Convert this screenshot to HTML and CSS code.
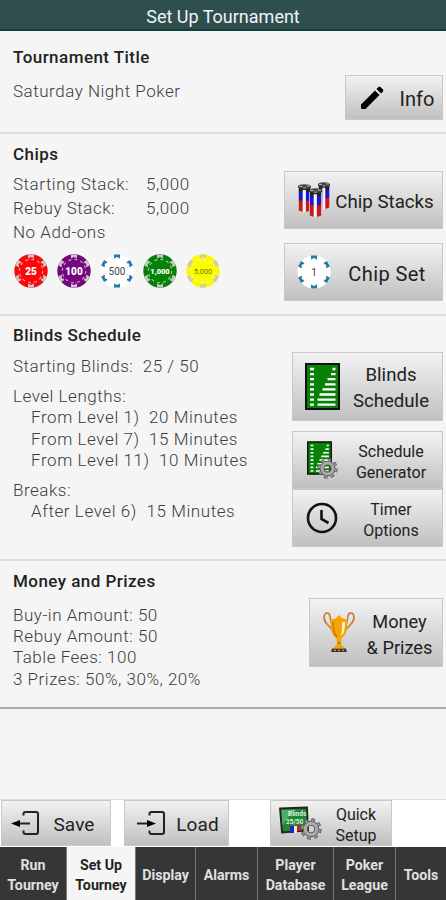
FILE: index.html
```html
<!DOCTYPE html>
<html lang="en">
<head>
    <meta charset="UTF-8">
    <meta name="viewport" content="width=device-width, initial-scale=1.0">
    <title>Set Up Tournament</title>
    <link rel="stylesheet" href="styles.css">
</head>
<body>
    <svg class="defs" width="0" height="0">
        <symbol id="chip" viewBox="0 0 34 34">
            <circle cx="17" cy="17" r="16.7" fill="currentColor"/>
            <g class="spots">
                <path id="spot" d="M14 .4h6v3.8h-1.600v-1h-2.800v1H14z"/>
                <use href="#spot" transform="rotate(60 17 17)"/>
                <use href="#spot" transform="rotate(120 17 17)"/>
                <use href="#spot" transform="rotate(180 17 17)"/>
                <use href="#spot" transform="rotate(240 17 17)"/>
                <use href="#spot" transform="rotate(300 17 17)"/>
            </g>
            <circle class="ring" cx="17" cy="17" r="11.700" fill="none" stroke-width="1.200" stroke-dasharray="3 3.130 3 3.120"/>
        </symbol>
        <symbol id="board" viewBox="0 0 35 47">
            <path d="M1 1h33v45H1z" fill="#078207" stroke="#111" stroke-width="2"/>
            <path d="M5 6h4M5 11.100h4M5 16.200h4M5 21.300h4M5 26.400h4M5 31.500h4M5 36.600h4M5 41.700h4M27.500 6h3M26 11.100h4.500M22.500 16.200h8M20 21.300h10.500M17.500 26.400h13M14.500 31.500h16M12.500 36.600h18M12.500 41.700h18" fill="none" stroke="#fff" stroke-width="2.300"/>
        </symbol>
        <symbol id="gear" viewBox="0 0 20 20">
            <circle cx="10" cy="10" r="8" fill="none" stroke="#555" stroke-width="3.400" stroke-dasharray="3.200 3.083"/>
            <circle cx="10" cy="10" r="5.200" fill="none" stroke="#555" stroke-width="4.600"/>
            <circle cx="10" cy="10" r="8" fill="none" stroke="#999" stroke-width="2" stroke-dasharray="2.200 4.083" stroke-dashoffset="-.5"/>
            <circle cx="10" cy="10" r="5.200" fill="none" stroke="#aaa" stroke-width="3"/>
        </symbol>
        <symbol id="stack" viewBox="0 0 12 29" preserveAspectRatio="none">
            <path d="M0 3h12v23q-6 4-12 0z" fill="#c9181c"/>
            <path d="M0 3h12v13q-6 2-12 0z" fill="#1c16c8"/>
            <path d="M0 2h12v5q-6 2-12 0z" fill="#222"/>
            <path d="M4.300 6h3v22h-3z" fill="#f2f2f2"/>
            <path d="M.4 4v22M11.600 4v22" stroke="#ddd" stroke-width=".8"/>
            <ellipse cx="6" cy="2.500" rx="6" ry="2.300" fill="#444"/>
            <path d="M1 2.500h3M8 2h3M5 4h2" stroke="#bbb"/>
        </symbol>
    </svg>

    <header class="title-bar">Set Up Tournament</header>

    <main class="content">
        <section class="section info-section">
            <div class="details">
                <h2>Tournament Title</h2>
                <p class="name">Saturday Night Poker</p>
            </div>
            <div class="actions">
                <button class="btn info-btn">
                    <svg class="pencil" viewBox="0 0 24 24"><path d="M1 18.500 15 4.500l4.500 4.500L5.500 23H2q-1 0-1-1zM16.500 3 18.500 1q1-.9 2 0L23 3.500q.9 1 0 2L21 7.500z"/></svg>
                    <span>Info</span>
                </button>
            </div>
        </section>

        <section class="section chips-section">
            <div class="details">
                <h2>Chips</h2>
                <dl>
                    <dt>Starting Stack:</dt><dd>5,000</dd>
                    <dt>Rebuy Stack:</dt><dd>5,000</dd>
                </dl>
                <p class="addons">No Add-ons</p>
                <div class="chips">
                    <svg class="chip red"><use href="#chip"/><text x="17" y="20.800">25</text></svg>
                    <svg class="chip purple"><use href="#chip"/><text x="17" y="20.800">100</text></svg>
                    <svg class="chip white"><use href="#chip"/><text x="17" y="20.500">500</text></svg>
                    <svg class="chip green"><use href="#chip"/><text x="17" y="19.800">1,000</text></svg>
                    <svg class="chip yellow"><use href="#chip"/><text x="17" y="19.500">5,000</text></svg>
                </div>
            </div>
            <div class="actions">
                <button class="btn stacks-btn">
                    <svg class="stacks" viewBox="0 0 34 36">
                        <use href="#stack" x="21" y="0" width="12" height="28"/>
                        <use href="#stack" x="1" y="2" width="13" height="29"/>
                        <use href="#stack" x="12" y="6" width="13" height="30"/>
                    </svg>
                    <span>Chip Stacks</span>
                </button>
                <button class="btn set-btn">
                    <svg class="chip white one"><use href="#chip"/><text x="17" y="20.500">1</text></svg>
                    <span>Chip Set</span>
                </button>
            </div>
        </section>

        <section class="section blinds-section">
            <div class="details">
                <h2>Blinds Schedule</h2>
                <p class="starting">Starting Blinds:&nbsp; 25 / 50</p>
                <p>Level Lengths:</p>
                <ul>
                    <li>From Level 1)&nbsp; 20 Minutes</li>
                    <li>From Level 7)&nbsp; 15 Minutes</li>
                    <li>From Level 11)&nbsp; 10 Minutes</li>
                </ul>
                <p class="breaks">Breaks:</p>
                <ul>
                    <li>After Level 6)&nbsp; 15 Minutes</li>
                </ul>
            </div>
            <div class="actions">
                <button class="btn blinds-btn">
                    <svg class="board" viewBox="0 0 35 47"><use href="#board"/></svg>
                    <span>Blinds<br>Schedule</span>
                </button>
                <button class="btn small-btn generator-btn">
                    <svg class="generator" viewBox="0 0 31 38">
                        <use href="#board" width="25" height="34"/>
                        <use href="#gear" x="10" y="17" width="21" height="21"/>
                    </svg>
                    <span>Schedule<br>Generator</span>
                </button>
                <button class="btn small-btn timer-btn">
                    <svg class="clock" viewBox="0 0 32 32"><circle cx="16" cy="16" r="14"/><path d="M15.500 8v9l7 4"/></svg>
                    <span>Timer<br>Options</span>
                </button>
            </div>
        </section>

        <section class="section money-section">
            <div class="details">
                <h2>Money and Prizes</h2>
                <p>Buy-in Amount: 50</p>
                <p>Rebuy Amount: 50</p>
                <p>Table Fees: 100</p>
                <p>3 Prizes: 50%, 30%, 20%</p>
            </div>
            <div class="actions">
                <button class="btn money-btn">
                    <svg class="trophy" viewBox="0 0 32 41">
                        <path d="M9 12C6 5 8 1 4.500 1 0 1 0 8 4 12q4 4 7 9M23 12c3-7 1-11 4.500-11C32 1 32 8 28 12q-4 4-7 9" fill="none" stroke="#c9782f" stroke-width="1.600"/>
                        <path d="M7.500 8 13 6l3-3 3 3 5.500 2c0 9-1 15-6 18.500L18 32l3.500 4h-11l3.500-4-.5-5.500C8.500 23 7.500 17 7.500 8z" fill="#f4a407"/>
                        <path d="M19 10h3c0 7-1 12-4 14 1-5 1-9 1-14z" fill="#fff3ca"/>
                        <path d="M10 10c0 7 1 12 4 15M14 31h4" fill="none" stroke="#ce7900" stroke-width="1.500"/>
                        <path d="M9 36.500h14l1 3.500H8z" fill="#49331b"/>
                        <path d="M11 38.300h2M15 38.300h2M19 38.300h2" stroke="#d8b36c"/>
                    </svg>
                    <span>Money<br>&amp; Prizes</span>
                </button>
            </div>
        </section>
    </main>

    <div class="toolbar">
        <button class="btn save-btn">
            <svg class="door" viewBox="0 0 31 26"><path class="frame" d="M13.500 5.500V4q0-2 2-2H26q2 0 2 2v18q0 2-2 2H15.500q-2 0-2-2v-1.500"/><path class="shaft" d="M7 13.500h13"/><path d="M1 13.500 10 10v7z"/></svg>
            <span>Save</span>
        </button>
        <button class="btn load-btn">
            <svg class="door" viewBox="0 0 31 26"><path class="frame" d="M13.500 5.500V4q0-2 2-2H26q2 0 2 2v18q0 2-2 2H15.500q-2 0-2-2v-1.500"/><path class="shaft" d="M1 13.500h12"/><path d="M20 13.500 11 10v7z"/></svg>
            <span>Load</span>
        </button>
        <button class="btn quick-btn">
            <svg class="quick" viewBox="0 0 44 34">
                <path d="M2 2.500 29 1.500l1 23-26 2z" fill="#238439" stroke="#222" stroke-width="1.800"/>
                <path d="m3.500 4 12-.5-11 16z" fill="#4fae62"/>
                <text x="10" y="10">Blinds</text>
                <text x="8" y="18">25/50</text>
                <path d="M12 20h4v7h-4z" fill="#2822b8"/><path d="M16 20h3v7h-3z" fill="#e8e8e8"/><path d="M19 19h4v6h-4z" fill="#be2525"/>
                <use href="#gear" x="22" y="12" width="22" height="22"/>
            </svg>
            <span>Quick<br>Setup</span>
        </button>
    </div>

    <nav class="tabs">
        <a>Run<br>Tourney</a>
        <a class="active">Set Up<br>Tourney</a>
        <a>Display</a>
        <a>Alarms</a>
        <a>Player<br>Database</a>
        <a>Poker<br>League</a>
        <a class="tools">Tools</a>
    </nav>
</body>
</html>
```
FILE: styles.css
```css
* {
    box-sizing: border-box;
}

body {
    margin: 0;
    height: 900px;
    display: flex;
    flex-direction: column;
    overflow: hidden;
    background: #f5f5f5;
    color: #3c3c3c;
    font-family: Roboto, sans-serif;
    font-size: 17px;
    font-weight: 300;
    letter-spacing: 0.52px;
}

h2, p, ul, dl, dd {
    margin: 0;
    padding: 0;
}

.defs {
    position: absolute;
}

.title-bar {
    height: 31px;
    flex: none;
    padding-top: 3px;
    border-bottom: 2px solid #143f36;
    background: #2f4f4f;
    color: #f0f5f5;
    font-size: 18px;
    font-weight: 400;
    letter-spacing: 0;
    line-height: 28px;
    text-align: center;
}

.content {
    flex: 1;
}

.section {
    display: flex;
    justify-content: space-between;
    padding: 0 3px 0 13px;
    border-bottom: 2px solid #dedede;
}

.info-section {
    height: 103px;
}

.chips-section {
    height: 182px;
}

.blinds-section {
    height: 245px;
}

.money-section {
    height: 148px;
    border-color: #aaa;
}

.details {
    white-space: nowrap;
}

h2 {
    padding-top: 9px;
    color: #222;
    font-size: 17px;
    font-weight: 500;
    letter-spacing: 0.45px;
    line-height: 22px;
}

.info-section h2 {
    padding-top: 15px;
}

.name {
    padding-top: 12px;
    line-height: 22px;
}

dl {
    display: grid;
    grid-template-columns: 133px auto;
    padding-top: 7px;
    line-height: 24px;
}

.addons {
    line-height: 24px;
}

.chips {
    display: flex;
    gap: 9px;
    margin: 10px 0 0 1px;
}

.chip {
    width: 34px;
    height: 34px;
    flex: none;
    fill: #fff;
    font-size: 10px;
    font-weight: 900;
    letter-spacing: 0;
    text-anchor: middle;
}

.spots {
    fill: #c8c8c8;
}

.ring {
    stroke: #ffffff99;
}

.red {
    color: #fb0808;
}

.purple {
    color: #760580;
}

.green {
    color: #078007;
}

.yellow {
    color: #fbfb00;
}

/* the spots inherit their fill from the chip */
.white {
    color: #fff;
    --spot: #2478ac;
}

.spots {
    fill: var(--spot, #c8c8c8);
}

.white .ring {
    stroke: #aab7c0;
}

.white text {
    fill: #444;
    font-weight: 400;
}

.green text {
    font-size: 7.5px;
}

.yellow text {
    fill: #777700;
    font-size: 7.5px;
    font-weight: 400;
}

.blinds-section h2 {
    padding-top: 8px;
}

.blinds-section p,
.blinds-section li,
.money-section p {
    line-height: 21.2px;
}

.blinds-section .starting {
    padding: 10px 0 9px;
}

.blinds-section .breaks {
    padding-top: 9px;
}

ul {
    padding-left: 18px;
    letter-spacing: 0.58px;
    list-style: none;
}

.money-section h2 {
    padding-bottom: 13px;
}

.actions {
    flex: none;
}

.btn {
    display: flex;
    align-items: center;
    padding: 0;
    border: 1px solid #c8c8c8;
    background: linear-gradient(#f2f2f2, #c0c0c0);
    color: #222;
    font-family: inherit;
    font-size: 19px;
    font-weight: 400;
    letter-spacing: 0.1px;
    line-height: 26px;
    white-space: nowrap;
}

.btn span {
    flex: 1;
    text-align: center;
}

.btn svg {
    flex: none;
}

.info-btn {
    width: 98px;
    height: 45px;
    margin-top: 44px;
}

.pencil {
    width: 24px;
    height: 24px;
    margin-left: 14px;
}

.info-btn span {
    padding: 3px 0 0 8px;
    font-size: 20px;
}

.stacks-btn,
.set-btn {
    width: 159px;
    height: 58px;
    margin-top: 37px;
}

.set-btn {
    margin-top: 14px;
    font-size: 20px;
    letter-spacing: 0.4px;
}

.stacks {
    width: 34px;
    height: 36px;
    margin-left: 12px;
}

.stacks-btn span {
    padding: 4px 4px 0 0;
    font-size: 18.7px;
    letter-spacing: 0;
}

.set-btn .chip {
    margin-left: 12px;
}

.set-btn span {
    padding: 3px 0 0 1px;
}

.blinds-btn {
    width: 151px;
    height: 69px;
    margin-top: 36px;
    font-size: 18.6px;
    letter-spacing: 0;
}

.board {
    width: 35px;
    height: 47px;
    margin-left: 12px;
}

.blinds-btn span {
    padding: 3px 0 0 0;
}

.small-btn {
    width: 151px;
    height: 58px;
    margin-top: 10px;
    font-size: 16px;
    letter-spacing: 0;
    line-height: 21px;
}

.timer-btn {
    margin-top: 0;
}

.generator {
    width: 31px;
    height: 38px;
    margin-left: 14px;
}

.clock {
    width: 32px;
    height: 32px;
    margin-left: 13px;
    fill: none;
    stroke: #111;
    stroke-width: 2.6;
}

.small-btn span {
    padding: 3px 0 0 2px;
}

.money-btn {
    width: 134px;
    height: 69px;
    margin-top: 37px;
    font-size: 18.2px;
    letter-spacing: 0;
}

.trophy {
    width: 32px;
    height: 41px;
    margin-left: 13px;
}

.money-btn span {
    padding: 4px 0 0 2px;
}

.toolbar {
    height: 48px;
    flex: none;
    display: flex;
    padding: 0 0 0 1px;
    border-top: 1px solid #ddd;
    background: #fff;
}

.toolbar .btn {
    height: 46px;
}

.save-btn {
    width: 110px;
}

.load-btn {
    width: 105px;
    margin-left: 13px;
}

.door {
    width: 31px;
    height: 26px;
    margin-left: 8px;
}

.load-btn .door {
    margin-left: 11px;
}

.frame,
.shaft {
    fill: none;
    stroke: #222;
    stroke-width: 2;
}

.save-btn span {
    padding: 4px 3px 0 0;
}

.load-btn span {
    padding: 4px 0 0 0;
}

.quick-btn {
    width: 122px;
    margin-left: 41px;
    font-size: 16px;
    letter-spacing: 0;
    line-height: 21px;
}

.quick {
    width: 44px;
    height: 34px;
    margin-left: 7px;
}

.quick text {
    fill: #d9f2dc;
    font-size: 6.5px;
    font-weight: 700;
    letter-spacing: 0;
}

.quick-btn span {
    padding: 4px 1px 0 0;
}

.tabs {
    height: 53px;
    flex: none;
    display: grid;
    grid-template-columns: 67px 69px 60px 62px 76px 62px 50px;
    background: #363636;
    color: #e0e0e0;
    font-size: 14.2px;
    font-weight: 700;
    letter-spacing: 0;
    line-height: 20px;
    text-align: center;
}

.tabs a {
    display: flex;
    align-items: center;
    justify-content: center;
    padding-top: 3px;
    border-right: 1px solid #777;
}

.tabs a.active {
    background: #f5f5f5;
    color: #222;
}

.tabs .tools {
    border-right: none;
}
```
